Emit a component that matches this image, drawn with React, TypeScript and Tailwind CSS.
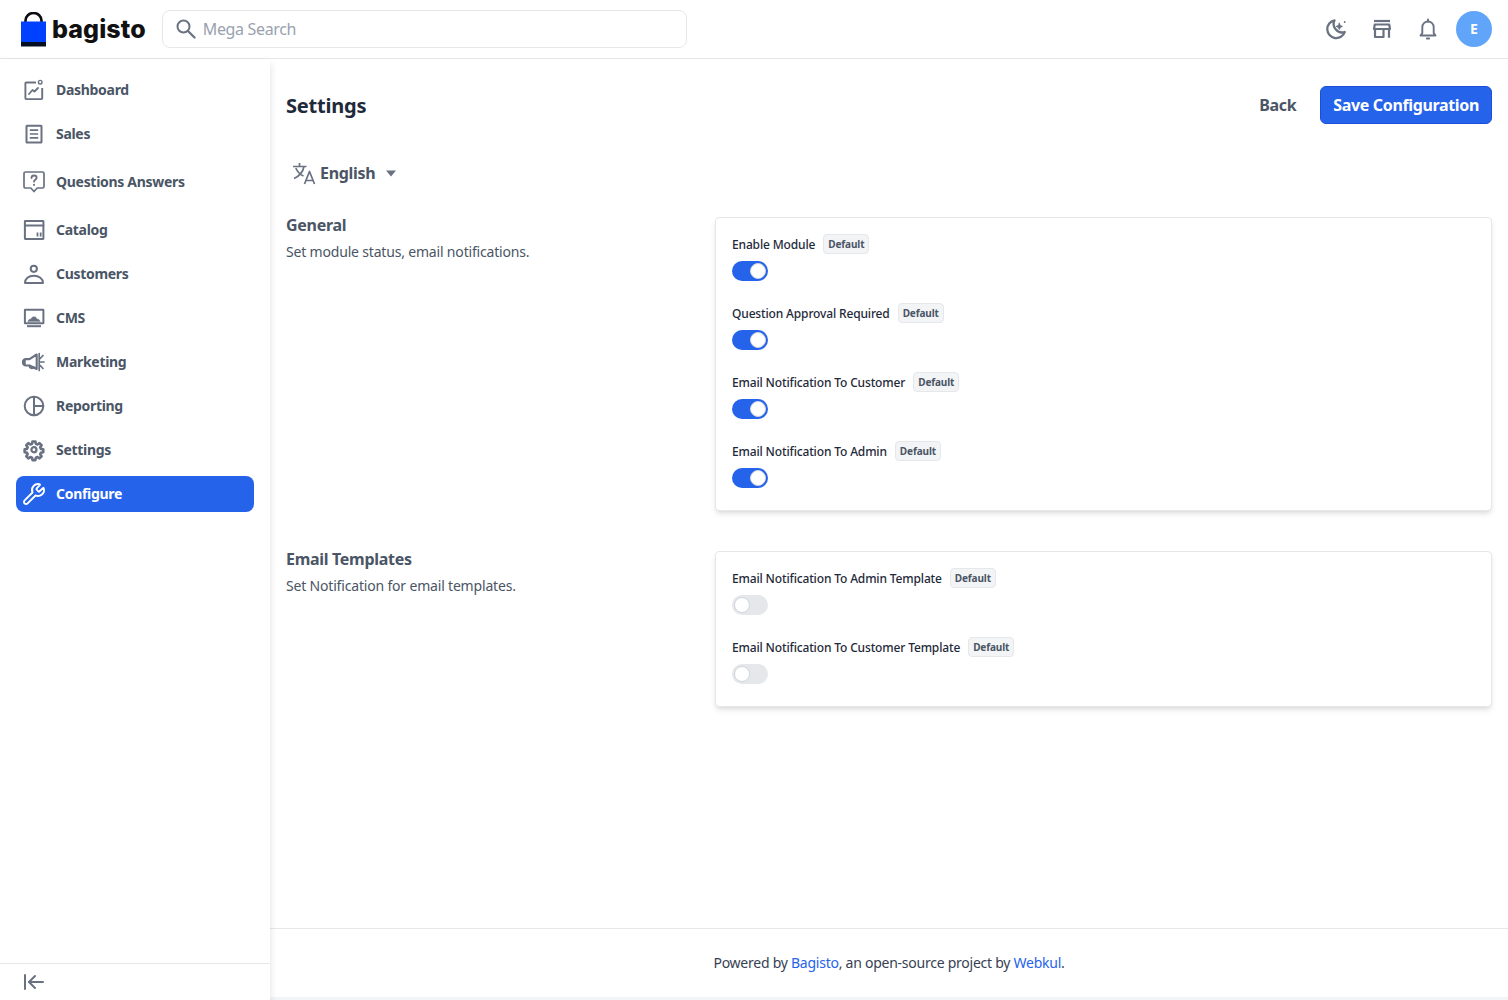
import React from "react";
import { Wrench, ArrowLeftToLine } from "lucide-react";

const S = ({ children, className = "w-6 h-6" }: { children: React.ReactNode; className?: string }) => (
  <svg viewBox="0 0 24 24" fill="none" stroke="currentColor" strokeWidth="2" strokeLinecap="round" strokeLinejoin="round" className={className}>
    {children}
  </svg>
);

const icons: Record<string, React.ReactNode> = {
  Dashboard: (
    <S>
      <path d="M14 4.500H4.200a.8.800 0 0 0-.8.8v15c0 .5.4.8.8.8h15.200c.5 0 .8-.3.8-.8V10" strokeWidth="1.900" strokeLinecap="butt" />
      <circle cx="18.200" cy="4.200" r="1.800" strokeWidth="1.400" />
      <path d="M7 16l3.500-4 2 1.500 3.500-3.500" strokeWidth="1.800" />
    </S>
  ),
  Sales: (
    <S>
      <rect x="4.500" y="3.700" width="15" height="16.800" rx="0.500" />
      <path d="M7.800 8.200h8.400M7.800 12h8.400M7.800 15.800h8.400" strokeWidth="1.700" strokeLinecap="butt" />
    </S>
  ),
  "Questions Answers": (
    <S>
      <path d="M3.500 2h17c.8 0 1.500.7 1.500 1.500v13c0 .8-.7 1.500-1.500 1.500H15.200l-3.200 3.500L8.800 18H3.500C2.700 18 2 17.300 2 16.500v-13C2 2.700 2.700 2 3.500 2z" strokeWidth="1.700" />
      <path d="M9.500 8c0-1.500 1.100-2.500 2.600-2.500s2.500 1 2.500 2.300c0 2-2.600 2-2.600 3.900" strokeWidth="1.800" />
      <path d="M12 14.800v.3" />
    </S>
  ),
  Catalog: (
    <S>
      <rect x="2.900" y="2.900" width="18.500" height="18" rx="0.300" strokeLinejoin="miter" />
      <path d="M2.900 7.500h18.500" />
      <path d="M15.500 14.500v4M18.700 14.500v4" strokeWidth="1.800" strokeLinecap="butt" />
    </S>
  ),
  Customers: (
    <S>
      <circle cx="11.800" cy="6.800" r="3.100" />
      <path d="M3 21c0-4.200 3.500-7.200 8.800-7.200s9.200 3 9.200 7.200z" />
    </S>
  ),
  CMS: (
    <S>
      <rect x="2.900" y="3.700" width="18.500" height="13.600" rx="0.300" strokeLinejoin="miter" />
      <path d="M6 15.500c.3-1.700 1.300-2.300 2.800-2.200.5-1.500 1.700-2.500 3.200-2.500s2.700 1 3.200 2.500c1.500-.1 2.500.5 2.800 2.200z" fill="currentColor" strokeWidth="0.500" />
      <path d="M5 20.200h14" strokeWidth="2" strokeLinecap="butt" />
    </S>
  ),
  Marketing: (
    <S>
      <path d="M14.700 4.500v14.500L7.500 15.500H4a3.200 3.200 0 0 1 0-6.400h3.500z" strokeWidth="2.100" />
      <path d="M7.500 15.800a2.300 2.300 0 0 0 4.300 1.200" strokeWidth="2" />
      <path d="M2.500 10v4.500" strokeWidth="2.500" />
      <path d="M21 5.500l-2.800 3M22 12h-3.500M21 18.500l-2.800-3M17.200 3.500v17" strokeWidth="1.700" />
    </S>
  ),
  Reporting: (
    <S>
      <circle cx="12" cy="12" r="9.300" />
      <path d="M12 2.700v18.600M12 12h9.300" />
    </S>
  ),
  Settings: (
    <S>
      <g transform="translate(1.500 1.300) scale(.87)">
        <path
          d="M10.300 2.500h3.400l.5 2.700 1.900.8 2.300-1.600 2.400 2.400-1.600 2.300.8 1.900 2.700.5v3.400l-2.700.5-.8 1.900 1.600 2.300-2.400 2.400-2.300-1.600-1.900.8-.5 2.700h-3.400l-.5-2.700-1.900-.8-2.300 1.600-2.400-2.400 1.600-2.300-.8-1.900-2.700-.5v-3.400l2.700-.5.8-1.900-1.600-2.300 2.400-2.400 2.300 1.600 1.900-.8z"
          strokeWidth="3"
        />
        <circle cx="12" cy="12" r="2.900" strokeWidth="2.600" />
      </g>
    </S>
  ),
  Configure: <Wrench className="w-6 h-6" strokeWidth={1.9} />,
};

const nav = ["Dashboard", "Sales", "Questions Answers", "Catalog", "Customers", "CMS", "Marketing", "Reporting", "Settings", "Configure"];

const Toggle = ({ on }: { on: boolean }) => (
  <div className={`flex h-5 w-9 items-center rounded-full px-0.5 ${on ? "justify-end bg-[#2563eb]" : "justify-start bg-[#e5e7eb]"}`}>
    <div className="h-4 w-4 rounded-full border border-gray-300 bg-white" />
  </div>
);

const Field = ({ label, on }: { label: string; on: boolean }) => (
  <div className="mb-[22px] flex flex-col gap-[7px]">
    <div className="flex h-[20px] items-center gap-2">
      <span className="mt-[2px] text-xs font-medium tracking-[-0.15px] text-gray-800">{label}</span>
      <span className="rounded border border-gray-200 bg-gray-100 px-1 py-[2px] text-[10px] leading-[14px] font-bold tracking-[-0.12px] text-gray-600">Default</span>
    </div>
    <Toggle on={on} />
  </div>
);

const Section = ({ title, desc, fields, on }: { title: string; desc: string; fields: string[]; on: boolean }) => (
  <div className="flex">
    <div className="w-[429px] shrink-0">
      <p className="text-base leading-4 font-bold tracking-[-0.3px] text-gray-600">{title}</p>
      <p className="mt-[9px] text-sm leading-5 tracking-[-0.18px] text-gray-600">{desc}</p>
    </div>
    <div className="flex-1 rounded border border-gray-200 bg-white px-4 pt-4 shadow-md">
      {fields.map((f) => (
        <Field key={f} label={f} on={on} />
      ))}
    </div>
  </div>
);

export default function App() {
  return (
    <div className="flex h-screen flex-col overflow-hidden bg-gray-100 font-['Noto_Sans','Open_Sans',sans-serif]">
      <header className="flex h-[59px] shrink-0 items-center justify-between border-b border-gray-200 bg-white pr-4 pl-[21px]">
        <div className="flex items-center">
          <div className="flex items-center gap-[6px]">
            <svg viewBox="0 0 25 35" className="h-[35px] w-[25px]">
              <path d="M4.500 13V8.500a8 7.500 0 0 1 16 0V13" fill="none" stroke="#0b0b12" strokeWidth="2.600" />
              <rect x="0" y="9.500" width="25" height="21" fill="#0041ff" />
              <rect x="0" y="30" width="25" height="4.500" fill="#060e22" />
            </svg>
            <span className="font-['Inter',sans-serif] text-[25px] leading-none font-extrabold tracking-[0.1px] text-[#111]">bagisto</span>
          </div>
          <div className="ml-[16px] flex h-[38px] w-[525px] items-center gap-[7px] rounded-lg border border-gray-200 px-[13px]">
            <svg viewBox="0 0 20 20" fill="none" stroke="currentColor" strokeWidth="2" strokeLinecap="round" className="h-5 w-5 text-gray-500">
              <circle cx="7.500" cy="7.500" r="6" />
              <path d="M12 12l6.500 6.500" strokeWidth="2.300" />
            </svg>
            <span className="text-base tracking-[-0.35px] text-gray-400">Mega Search</span>
          </div>
        </div>
        <div className="flex items-center gap-[10px] text-gray-500">
          <div className="flex h-9 w-9 items-center justify-center">
            <S className="h-6 w-6">
              <path d="M10.500 3.300a9 9 0 1 0 10.300 11.700A8.500 8.500 0 0 1 10.500 3.300z" strokeWidth="2.300" />
              <path d="M15.300 6.200l1 2.200 2.200 1-2.200 1-1 2.200-1-2.200-2.200-1 2.200-1z" fill="currentColor" strokeWidth="0.800" />
              <circle cx="20.700" cy="5" r="0.900" fill="currentColor" stroke="none" />
            </S>
          </div>
          <div className="flex h-9 w-9 items-center justify-center">
            <S className="h-6 w-6">
              <path d="M4 4h16" strokeWidth="2.200" strokeLinecap="butt" />
              <path d="M4 12l.8-4.500h14.400L20 12z" strokeWidth="2.200" strokeLinecap="butt" />
              <path d="M5 12v8h8.500v-8M19 12v8.800" strokeWidth="2.200" strokeLinecap="butt" />
            </S>
          </div>
          <div className="flex h-9 w-9 items-center justify-center">
            <S className="h-6 w-6">
              <path d="M12 4.500a5.700 5.700 0 0 0-5.700 5.700v6L4.500 18.500h15l-1.800-2.300v-6A5.700 5.700 0 0 0 12 4.500z" strokeWidth="1.900" />
              <path d="M12 2.500v2" strokeWidth="2" />
              <path d="M10.800 21.500h2.400" strokeWidth="1.800" />
            </S>
          </div>
          <div className="flex h-9 w-9 items-center justify-center rounded-full bg-[#60a5fa] text-sm font-bold text-white">E</div>
        </div>
      </header>

      <div className="flex min-h-0 flex-1">
        <aside className="z-10 flex w-[270px] shrink-0 flex-col bg-white shadow-[0_4px_8px_rgba(0,0,0,0.12)]">
          <nav className="flex flex-1 flex-col gap-2 px-4 pt-[13px]">
            {nav.map((n) => {
              const active = n === "Configure";
              return (
                <div
                  key={n}
                  className={`flex items-center gap-[10px] rounded-lg px-[6px] ${n === "Questions Answers" ? "h-[44px]" : "h-9"} ${active ? "bg-[#2563eb] text-white" : "text-gray-500"}`}
                >
                  {icons[n]}
                  <span className={`text-sm font-bold tracking-[-0.3px] ${active ? "text-white" : "text-gray-600"}`}>{n}</span>
                </div>
              );
            })}
          </nav>
          <div className="flex h-[37px] shrink-0 items-center border-t border-gray-200 pl-[22px] text-gray-500">
            <ArrowLeftToLine className="h-6 w-6" strokeWidth={2} />
          </div>
        </aside>

        <main className="flex min-w-0 flex-1 flex-col pb-[3px]">
          <div className="flex-1 bg-white px-4">
            <div className="mt-[27px] flex h-[38px] items-center justify-between">
              <p className="mt-[2px] text-xl font-bold tracking-[-0.2px] text-gray-800">Settings</p>
              <div className="flex items-center gap-6">
                <span className="text-base font-bold tracking-[-0.3px] text-gray-600">Back</span>
                <div className="flex h-[38px] items-center rounded-md border border-[#1d4ed8] bg-[#2563eb] px-3 text-base font-bold tracking-[-0.35px] text-white">Save Configuration</div>
              </div>
            </div>
            <div className="mt-[29px] flex h-[40px] items-center gap-[4px] pl-[6px] text-gray-600">
              <svg viewBox="0 0 24 24" fill="none" stroke="currentColor" strokeWidth="1.700" strokeLinejoin="round" className="h-6 w-6 text-gray-500">
                <path d="M1 5.500h13.500M7.500 2v3.500M12 5.500c-.9 4.800-4.500 9.500-10 12M3.800 7c1.700 4 4.400 6.500 7.700 8" />
                <path d="M12.500 23l5-12.500 5 12.500M14 19.500h7" />
              </svg>
              <span className="text-base font-bold tracking-[-0.3px]">English</span>
              <svg viewBox="0 0 10 7" className="ml-[7px] h-[7px] w-[10px] fill-gray-500"><path d="M0 .5h10L5 6.500z" /></svg>
            </div>
            <div className="mt-[24px] flex flex-col gap-10">
              <Section
                title="General"
                desc="Set module status, email notifications."
                on
                fields={["Enable Module", "Question Approval Required", "Email Notification To Customer", "Email Notification To Admin"]}
              />
              <Section
                title="Email Templates"
                desc="Set Notification for email templates."
                on={false}
                fields={["Email Notification To Admin Template", "Email Notification To Customer Template"]}
              />
            </div>
          </div>
          <footer className="flex h-[69px] shrink-0 items-center justify-center border-t border-gray-200 bg-white text-sm tracking-[-0.25px] text-gray-700">
            <p>
              Powered by <span className="text-[#2563eb]">Bagisto</span>, an open-source project by <span className="text-[#2563eb]">Webkul</span>.
            </p>
          </footer>
        </main>
      </div>
    </div>
  );
}
